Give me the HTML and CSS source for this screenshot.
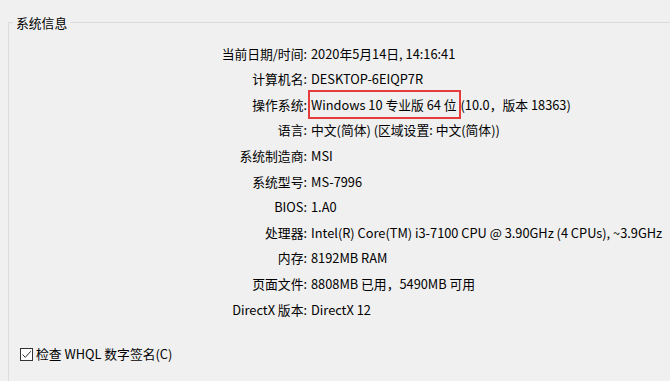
FILE: index.html
```html
<!DOCTYPE html>
<html>
<head>
<meta charset="utf-8">
<link rel="stylesheet" href="styles.css">
</head>
<body>
<fieldset class="group">
  <legend class="group-title">系统信息</legend>
  <div class="info">
    <div class="label">当前日期/时间:</div><div class="value">2020年5月14日, 14:16:41</div>
    <div class="label">计算机名:</div><div class="value">DESKTOP-6EIQP7R</div>
    <div class="label">操作系统:</div><div class="value"><span class="hl">Windows 10 专业版 64 位</span>(10.0，版本 18363)</div>
    <div class="label">语言:</div><div class="value">中文(简体) (区域设置: 中文(简体))</div>
    <div class="label">系统制造商:</div><div class="value">MSI</div>
    <div class="label">系统型号:</div><div class="value">MS-7996</div>
    <div class="label">BIOS:</div><div class="value">1.A0</div>
    <div class="label">处理器:</div><div class="value">Intel(R) Core(TM) i3-7100 CPU @ 3.90GHz (4 CPUs), ~3.9GHz</div>
    <div class="label">内存:</div><div class="value">8192MB RAM</div>
    <div class="label">页面文件:</div><div class="value">8808MB 已用，5490MB 可用</div>
    <div class="label">DirectX 版本:</div><div class="value">DirectX 12</div>
  </div>
  <label class="check">
    <span class="box"><svg width="11" height="11" viewBox="0 0 11 11"><path d="M1.5 5.5 L4.3 8.3 L9.8 2.2" fill="none" stroke="#333" stroke-width="1"/></svg></span>
    <span>检查 WHQL 数字签名(C)</span>
  </label>
</fieldset>
</body>
</html>
```
FILE: styles.css
```css
html, body {
  margin: 0;
  padding: 0;
  background: #f0f0f0;
  height: 100%;
  overflow: hidden;
}
body {
  font-family: "Noto Sans CJK SC", "Noto Sans", sans-serif;
  font-size: 12.8px;
  color: #000;
}
.group {
  box-sizing: border-box;
  margin: 15px 0 0 8px;
  padding: 0;
  border: 1px solid #dcdcdc;
  border-right: none;
  border-bottom: none;
  height: 366px;
  min-width: 0;
}
.group-title {
  margin-left: 4px;
  padding: 0 3px;
  line-height: 15px;
}
.info {
  display: grid;
  grid-template-columns: 298px 1fr;
  column-gap: 4px;
  padding-top: 10.7px;
}
.label, .value {
  line-height: 25.6px;
  height: 25.6px;
  white-space: nowrap;
}
.label {
  text-align: right;
}
.hl {
  display: inline-block;
  line-height: 25px;
  margin: 0 2px 0 -1px;
  padding: 0 2px 0 1px;
  outline: 2px solid #e53c3c;
}
.check {
  display: flex;
  align-items: center;
  gap: 3px;
  margin: 22px 0 0 11px;
  line-height: 20px;
}
.box {
  width: 11px;
  height: 11px;
  border: 1px solid #333;
  background: #fff;
  display: flex;
}
```
